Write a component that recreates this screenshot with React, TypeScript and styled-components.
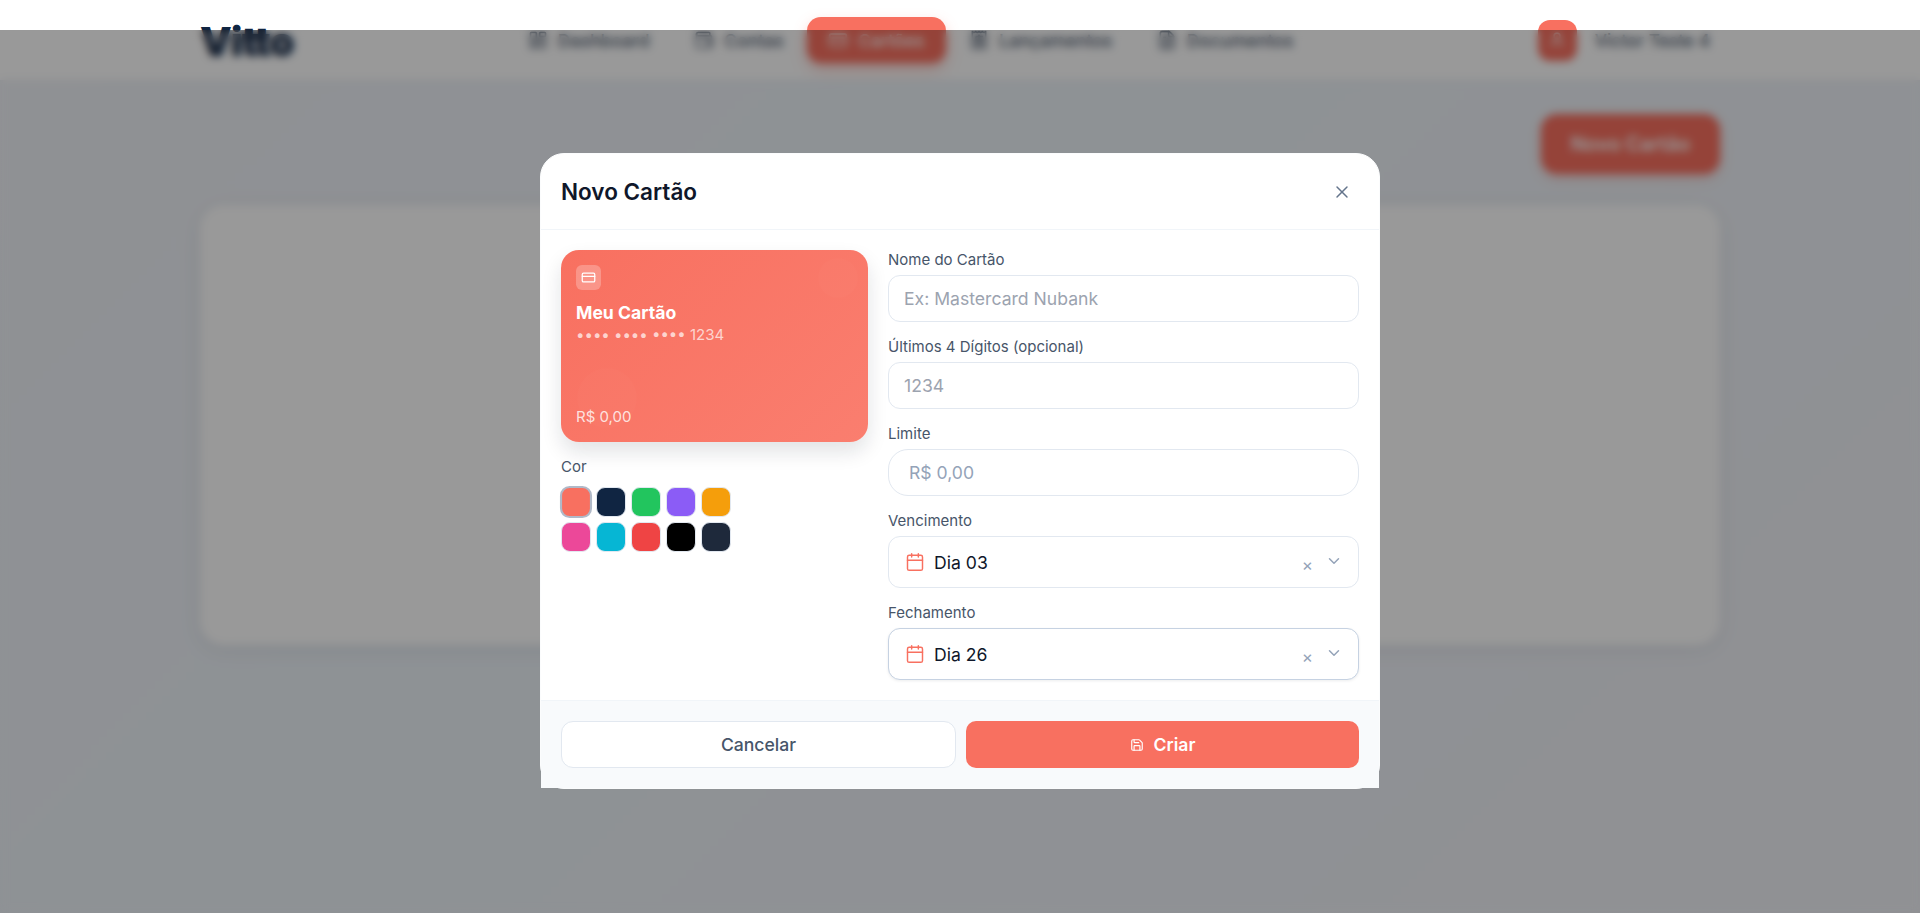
import React from "react";
import styled, { createGlobalStyle } from "styled-components";
import { Calendar, ChevronDown, CreditCard, FileText, LayoutDashboard, Receipt, Save, User, Wallet, X } from "lucide-react";

const Global = createGlobalStyle`
  html, body { margin: 0; padding: 0; height: 100%; overflow: hidden; }
  * { box-sizing: border-box; }
  body { font-family: Inter, "Noto Sans", sans-serif; background: #eff3f9; }
`;

const Page = styled.div`
  height: 913px;
  overflow: hidden;
  background: linear-gradient(135deg, #f0f2f7 0%, #edf3f9 40%, #f1f2f7 100%);
`;

const TopBar = styled.header`
  height: 80px;
  padding: 0 200px;
  background: #fff;
  box-shadow: 0 1px 4px rgba(15, 23, 42, 0.04);
  display: flex;
  align-items: center;
  justify-content: space-between;
`;

const Logo = styled.div`
  padding-top: 2px;
  font-size: 40px;
  font-weight: 900;
  letter-spacing: -1px;
  color: #102542;
`;

const Nav = styled.nav`
  display: flex;
  align-items: center;
  gap: 1.5px;
  margin-right: 10px;
`;

const NavItem = styled.div<{ $active?: boolean }>`
  height: 46px;
  padding: 0 21.5px;
  border-radius: 14px;
  display: flex;
  align-items: center;
  gap: 10px;
  font-size: 17.6px;
  font-weight: 500;
  color: ${(p) => (p.$active ? "#fff" : "#475569")};
  background: ${(p) => (p.$active ? "#f87060" : "transparent")};
  box-shadow: ${(p) => (p.$active ? "0 6px 14px rgba(248,112,96,.35)" : "none")};
`;

const UserBox = styled.div`
  margin-right: 10px;
  display: flex;
  align-items: center;
  gap: 18px;
  font-size: 17.3px;
  font-weight: 500;
  color: #475569;
`;

const Avatar = styled.div`
  width: 39px;
  height: 41px;
  border-radius: 12px;
  background: #f87060;
  color: #fff;
  display: flex;
  align-items: center;
  justify-content: center;
`;

const Main = styled.main`
  padding: 34px 200px 0;
`;

const ActionRow = styled.div`
  display: flex;
  justify-content: flex-end;
  margin-bottom: 31px;
`;

const NewButton = styled.div`
  width: 179px;
  height: 60px;
  border-radius: 16px;
  background: #f87060;
  color: #fff;
  font-size: 19.8px;
  font-weight: 600;
  display: flex;
  align-items: center;
  justify-content: center;
  box-shadow: 0 4px 12px rgba(248, 112, 96, 0.3);
`;

const EmptyPanel = styled.section`
  height: 440px;
  border-radius: 24px;
  background: #fff;
  box-shadow: 0 4px 20px rgba(15, 23, 42, 0.08);
`;

const Overlay = styled.div`
  position: fixed;
  inset: 30px 0 0 0;
  padding-bottom: 1px;
  background: rgba(0, 0, 0, 0.4);
  backdrop-filter: blur(4px);
  display: flex;
  align-items: center;
  justify-content: center;
`;

const Modal = styled.div`
  width: 840px;
  height: 636px;
  background: #fff;
  border: 1px solid #fbfcfd;
  border-radius: 24px;
`;

const ModalHeader = styled.div`
  height: 76px;
  padding: 0 20px;
  border-bottom: 1px solid #f1f5f9;
  display: flex;
  align-items: center;
  justify-content: space-between;
`;

const Title = styled.h2`
  margin: 0;
  font-size: 22.5px;
  font-weight: 600;
  color: #0f172a;
`;

const CloseButton = styled.button`
  width: 24px;
  height: 24px;
  padding: 0;
  margin-right: 5px;
  border: 0;
  background: none;
  color: #64748b;
  display: flex;
  align-items: center;
  justify-content: center;
`;

const ModalBody = styled.div`
  height: 470px;
  padding: 20px;
  display: grid;
  grid-template-columns: 307px 471px;
  gap: 20px;
`;

const CardPreview = styled.div`
  position: relative;
  height: 192px;
  padding: 15px;
  border-radius: 18px;
  overflow: hidden;
  color: #fff;
  background: linear-gradient(135deg, #f87060 0%, #fa7e6f 100%);
  box-shadow: 0 10px 20px rgba(15, 23, 42, 0.12);
  display: flex;
  flex-direction: column;
`;

const Glow = styled.span<{ $size: number; $top: number; $left: number }>`
  position: absolute;
  top: ${(p) => p.$top}px;
  left: ${(p) => p.$left}px;
  width: ${(p) => p.$size}px;
  height: ${(p) => p.$size}px;
  border-radius: 50%;
  background: rgba(255, 255, 255, 0.015);
`;

const CardIcon = styled.div`
  width: 25px;
  height: 25px;
  border-radius: 6px;
  background: rgba(255, 255, 255, 0.25);
  display: flex;
  align-items: center;
  justify-content: center;
`;

const CardName = styled.div`
  margin-top: 12px;
  font-size: 17.6px;
  line-height: 22px;
  font-weight: 700;
`;

const CardNumber = styled.div`
  margin-top: 1px;
  font-size: 15px;
  line-height: 20px;
  color: rgba(255, 255, 255, 0.7);
`;

const CardAmount = styled.div`
  margin-top: auto;
  font-size: 15px;
  line-height: 20px;
  color: rgba(255, 255, 255, 0.8);
`;

const ColorLabel = styled.div`
  margin-top: 16px;
  font-size: 15px;
  line-height: 18px;
  font-weight: 400;
  color: #475569;
`;

const Swatches = styled.div`
  margin-top: 11px;
  display: grid;
  grid-template-columns: repeat(5, 30px);
  gap: 5px;
`;

const Swatch = styled.div<{ $color: string; $selected?: boolean }>`
  width: 30px;
  height: 30px;
  border-radius: 9px;
  background: ${(p) => p.$color};
  border: ${(p) => (p.$selected ? "2px solid #b0b9c8" : "1px solid #e2e8f0")};
  transform: ${(p) => (p.$selected ? "scale(1.07)" : "none")};
`;

const Fields = styled.div`
  display: flex;
  flex-direction: column;
  gap: 15px;
`;

const Field = styled.div``;

const Label = styled.label`
  display: block;
  height: 19px;
  margin-bottom: 6px;
  font-size: 15px;
  line-height: 20px;
  font-weight: 400;
  color: #475569;
`;

const TextInput = styled.input<{ $pill?: boolean }>`
  display: block;
  width: 100%;
  height: 47px;
  padding: 0 ${(p) => (p.$pill ? "20px" : "15px")};
  border: 1px solid #e2e8f0;
  border-radius: ${(p) => (p.$pill ? "20px" : "12px")};
  background: #fff;
  font-family: inherit;
  font-size: 17.6px;
  color: #0f172a;
  outline: none;
  &::placeholder { color: ${(p) => (p.$pill ? "#94a3b8" : "#9ca3af")}; opacity: 1; }
`;

const SelectBox = styled.div<{ $focused?: boolean }>`
  height: 52px;
  padding: 0 17px 0 16px;
  border: 1px solid ${(p) => (p.$focused ? "#c6d2e2" : "#e2e8f0")};
  border-radius: 12px;
  background: #fff;
  box-shadow: ${(p) => (p.$focused ? "0 1px 3px rgba(15,23,42,.08)" : "none")};
  display: flex;
  align-items: center;
  color: #f87060;
`;

const SelectValue = styled.span`
  margin-left: 9px;
  font-size: 17.6px;
  color: #0f172a;
  flex: 1;
`;

const ClearMark = styled.span`
  font-size: 17px;
  line-height: 1;
  color: #94a3b8;
  margin: 7px 12px 0 0;
`;

const Chevron = styled.span`
  display: flex;
  margin: -2px -2px 0 0;
  color: #94a3b8;
`;

const ModalFooter = styled.div`
  height: 88px;
  padding: 20px;
  border-top: 1px solid #f1f5f9;
  background: #f8fafc;
  display: grid;
  grid-template-columns: 395px 393px;
  gap: 10px;
`;

const CancelButton = styled.button`
  height: 47px;
  border: 1px solid #e2e8f0;
  border-radius: 12px;
  background: #fff;
  font-family: inherit;
  font-size: 17.6px;
  font-weight: 500;
  color: #475569;
`;

const SubmitButton = styled.button`
  height: 47px;
  border: 0;
  border-radius: 10px;
  background: #f87060;
  font-family: inherit;
  font-size: 17.6px;
  font-weight: 600;
  color: #fff;
  display: flex;
  align-items: center;
  justify-content: center;
  gap: 10px;
`;

const colors = ["#f87060", "#102542", "#22c55e", "#8b5cf6", "#f59e0b", "#ec4899", "#06b6d4", "#ef4444", "#000000", "#1e293b"];

const navItems = [
  { label: "Dashboard", Icon: LayoutDashboard },
  { label: "Contas", Icon: Wallet },
  { label: "Cartões", Icon: CreditCard, active: true },
  { label: "Lançamentos", Icon: Receipt },
  { label: "Documentos", Icon: FileText },
];

export default function App() {
  return (
    <Page>
      <Global />
      <TopBar>
        <Logo>Vitto</Logo>
        <Nav>
          {navItems.map(({ label, Icon, active }) => (
            <NavItem key={label} $active={active}>
              <Icon size={20} />
              {label}
            </NavItem>
          ))}
        </Nav>
        <UserBox>
          <Avatar><User size={18} /></Avatar>
          Victor Teste 4
        </UserBox>
      </TopBar>
      <Main>
        <ActionRow><NewButton>Novo Cartão</NewButton></ActionRow>
        <EmptyPanel />
      </Main>
      <Overlay>
        <Modal>
          <ModalHeader>
            <Title>Novo Cartão</Title>
            <CloseButton><X size={20} strokeWidth={1.75} /></CloseButton>
          </ModalHeader>
          <ModalBody>
            <div>
              <CardPreview>
                <Glow $size={40} $top={8} $left={257} />
                <Glow $size={60} $top={118} $left={16} />
                <CardIcon><CreditCard size={15} /></CardIcon>
                <CardName>Meu Cartão</CardName>
                <CardNumber>•••• •••• •••• 1234</CardNumber>
                <CardAmount>R$ 0,00</CardAmount>
              </CardPreview>
              <ColorLabel>Cor</ColorLabel>
              <Swatches>
                {colors.map((c, i) => (
                  <Swatch key={c} $color={c} $selected={i === 0} />
                ))}
              </Swatches>
            </div>
            <Fields>
              <Field>
                <Label>Nome do Cartão</Label>
                <TextInput placeholder="Ex: Mastercard Nubank" />
              </Field>
              <Field>
                <Label>Últimos 4 Dígitos (opcional)</Label>
                <TextInput placeholder="1234" />
              </Field>
              <Field>
                <Label>Limite</Label>
                <TextInput $pill placeholder="R$ 0,00" />
              </Field>
              <Field>
                <Label>Vencimento</Label>
                <SelectBox>
                  <Calendar size={20} strokeWidth={1.75} />
                  <SelectValue>Dia 03</SelectValue>
                  <ClearMark>×</ClearMark>
                  <Chevron><ChevronDown size={18} /></Chevron>
                </SelectBox>
              </Field>
              <Field>
                <Label>Fechamento</Label>
                <SelectBox $focused>
                  <Calendar size={20} strokeWidth={1.75} />
                  <SelectValue>Dia 26</SelectValue>
                  <ClearMark>×</ClearMark>
                  <Chevron><ChevronDown size={18} /></Chevron>
                </SelectBox>
              </Field>
            </Fields>
          </ModalBody>
          <ModalFooter>
            <CancelButton>Cancelar</CancelButton>
            <SubmitButton><Save size={14} />Criar</SubmitButton>
          </ModalFooter>
        </Modal>
      </Overlay>
    </Page>
  );
}
